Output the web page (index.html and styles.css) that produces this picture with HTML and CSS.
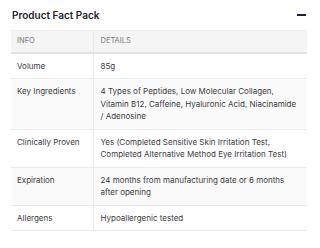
FILE: index.html
```html
<!DOCTYPE html>
<html>
<head>
<meta charset="utf-8">
<link rel="stylesheet" href="styles.css">
</head>
<body>
<section class="pack">
  <div class="head">
    <h2 class="title">Product Fact Pack</h2>
    <span class="toggle" aria-label="Collapse"></span>
  </div>
  <table class="facts">
    <thead>
      <tr><th class="c1">Info</th><th>Details</th></tr>
    </thead>
    <tbody>
      <tr><td class="c1">Volume</td><td>85g</td></tr>
      <tr><td class="c1">Key Ingredients</td><td>4 Types of Peptides, Low Molecular Collagen, Vitamin B12, Caffeine, Hyaluronic Acid, Niacinamide / Adenosine</td></tr>
      <tr><td class="c1">Clinically Proven</td><td>Yes (Completed Sensitive Skin Irritation Test, Completed Alternative Method Eye Irritation Test)</td></tr>
      <tr><td class="c1">Expiration</td><td>24 months from manufacturing date or 6 months after opening</td></tr>
      <tr><td class="c1">Allergens</td><td>Hypoallergenic tested</td></tr>
    </tbody>
  </table>
</section>
</body>
</html>
```
FILE: styles.css
```css
* { box-sizing: border-box; }
body {
  margin: 0;
  background: #fff;
  font-family: Inter, "Noto Sans", sans-serif;
  color: #3a3a40;
}
.pack {
  padding: 8px 13px 0 11px;
}
.head {
  display: flex;
  align-items: center;
  justify-content: space-between;
  height: 14px;
  padding-left: 1px;
  margin-bottom: 8px;
}
.title {
  margin: 0;
  font-size: 10px;
  font-weight: 600;
  color: #1f2430;
}
.toggle {
  width: 9px;
  height: 1.5px;
  background: #1c2135;
  margin-right: 1px;
}
.facts {
  width: 100%;
  border-collapse: collapse;
  font-size: 8px;
  line-height: 12.5px;
}
.facts th {
  background: #f5f5f5;
  color: #7a7a7a;
  font-weight: 400;
  text-transform: uppercase;
  text-align: left;
  font-size: 7.5px;
  height: 22px;
  padding: 0 6px;
  border-top: 1px solid #ededed;
  border-bottom: 2px solid #e3e3e3;
}
.facts td {
  padding: 6px 6px;
  vertical-align: top;
  border-bottom: 1px solid #ebebeb;
}
.facts tbody tr:nth-child(even) td { background: #fafafa; }
.facts .c1 {
  width: 82px;
  border-right: 1px solid #ebebeb;
}
.facts td + td, .facts th + th { padding-left: 7px; }
```
